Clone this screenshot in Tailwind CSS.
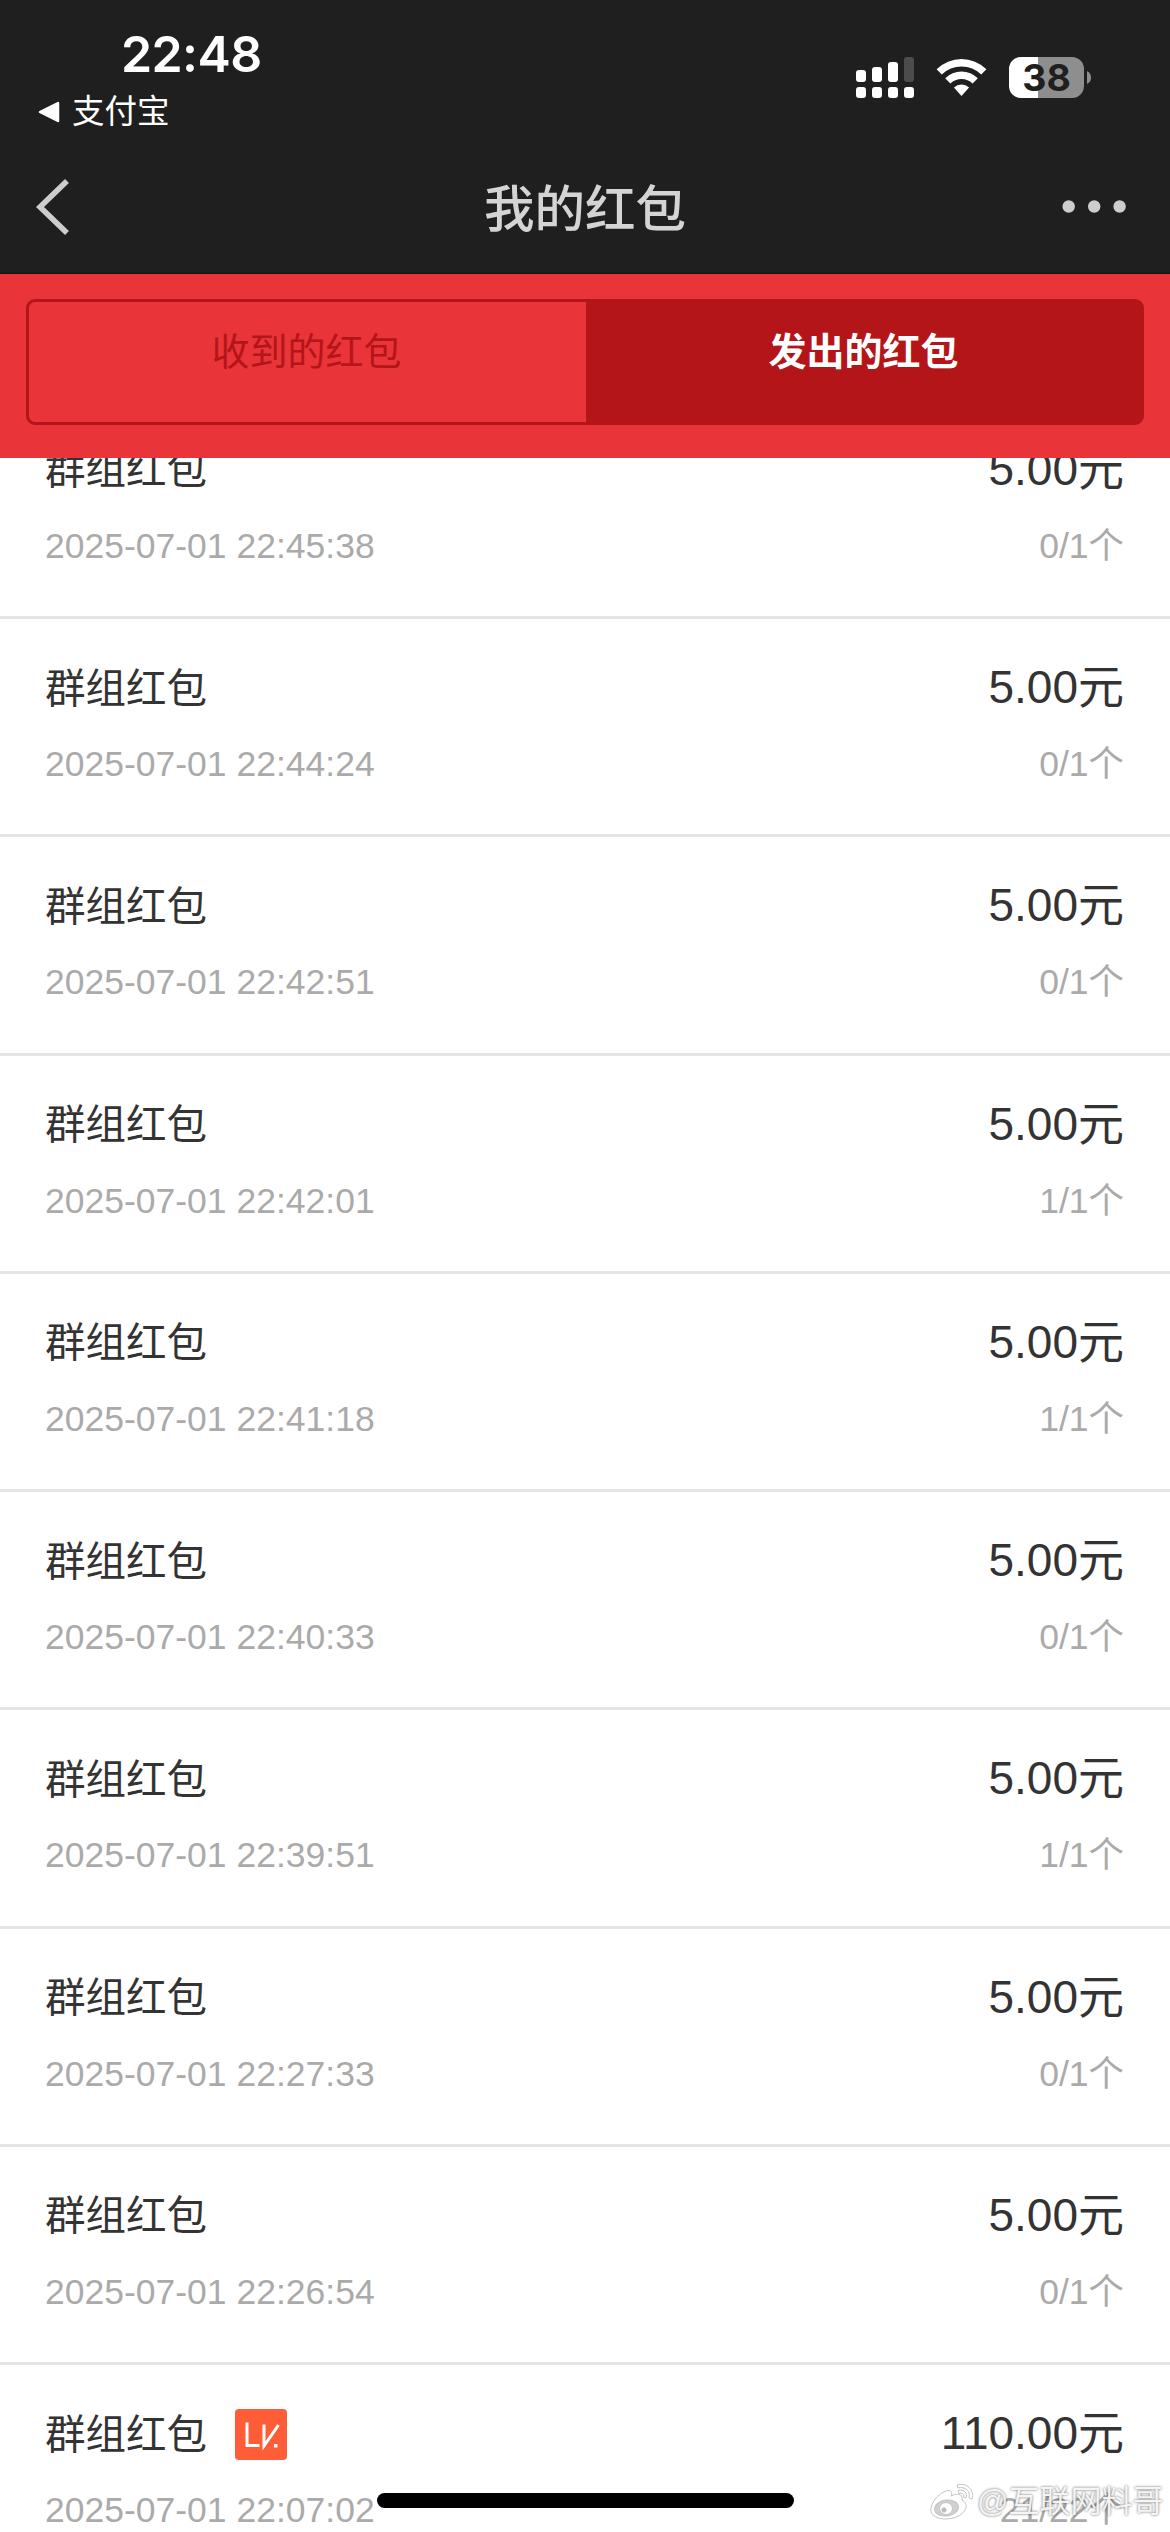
<!DOCTYPE html>
<html lang="zh-CN">
<head>
<meta charset="utf-8">
<title>我的红包</title>
<script src="https://cdn.jsdelivr.net/npm/@tailwindcss/browser@4"></script>
</head>
<body class="relative w-[1170px] h-[2532px] overflow-hidden bg-white flex flex-col font-['Liberation_Sans','Noto_Sans_CJK_SC',sans-serif]">
<header class="h-[274px] shrink-0 bg-[#1f1f1f] border-b border-black/40">
  <div class="h-[140px] flex justify-between">
    <div class="pt-[24px]">
      <div class="pl-[121px] h-[60px] leading-[60px] text-[50px] tracking-[-0.6px] font-semibold text-white font-['Inter',sans-serif]">22:48</div>
      <div class="pl-[38px] h-[56px] flex items-center gap-[12px] text-white text-[32.5px] leading-[56px]">
        <svg class="w-[22px] h-[22px]" viewBox="0 0 22 22"><path d="M2 11 L20 2 V20 Z" fill="#fff" stroke="#fff" stroke-width="2.5" stroke-linejoin="round"/></svg>
        <span>支付宝</span>
      </div>
    </div>
    <div class="pt-[57px] pr-[79px] flex items-start">
      <svg class="w-[58px] h-[41px]" viewBox="0 0 58 41" fill="#fff">
        <rect x="0" y="13" width="10" height="12" rx="3"/><rect x="16" y="10" width="10" height="15" rx="3"/><rect x="32" y="5" width="10" height="20" rx="3"/><rect x="48" y="0" width="10" height="25" rx="3" fill="#4c4c4c"/>
        <rect x="0" y="30" width="10" height="11" rx="3"/><rect x="16" y="30" width="10" height="11" rx="3"/><rect x="32" y="30" width="10" height="11" rx="3"/><rect x="48" y="30" width="10" height="11" rx="3"/>
      </svg>
      <svg class="ml-[22px] w-[51px] h-[41px]" viewBox="0 0 51 41" fill="#fff">
        <path d="M0.6 12.2 A35.5 35.5 0 0 1 50.4 12.2 L45.2 17.6 A28 28 0 0 0 5.8 17.6 Z"/>
        <path d="M9.2 21.2 A23.2 23.2 0 0 1 41.8 21.2 L36.6 26.6 A15.8 15.8 0 0 0 14.4 26.6 Z"/>
        <path d="M17.9 30.6 A11 11 0 0 1 33.1 30.6 L25.5 39 Z"/>
      </svg>
      <div class="ml-[22px] w-[75px] h-[41px] rounded-[12px] bg-linear-to-r from-white from-[29px] to-[#8e8e8e] to-[29px] text-[#1f1f1f] text-center text-[37.5px] leading-[42px] font-bold font-['Inter',sans-serif]">38</div>
      <svg class="ml-[3px] w-[4px] h-[41px]" viewBox="0 0 4 41"><path d="M0 14 Q4 16 4 20.500 Q4 25 0 27 Z" fill="#8e8e8e"/></svg>
    </div>
  </div>
  <div class="h-[133px] flex justify-between">
    <svg class="mt-[38px] ml-[36px] w-[200px] h-[58px]" viewBox="0 0 200 58"><path d="M31 3 L4 29 L31 55" fill="none" stroke="#cdcdcd" stroke-width="5.600"/></svg>
    <h1 class="pt-[37px] text-[50.5px] leading-[66px] font-medium text-[#d4d4d4]">我的红包</h1>
    <svg class="mt-[59px] w-[236px] h-[15px]" viewBox="0 0 236 15" fill="#cdcdcd"><circle cx="134.700" cy="7.500" r="6.200"/><circle cx="160.200" cy="7.500" r="6.200"/><circle cx="185.600" cy="7.500" r="6.200"/></svg>
  </div>
</header>
<nav class="h-[184px] shrink-0 bg-[#e9343a] px-[26px] pt-[25px]">
  <div class="h-[126px] flex border-[3px] border-[#b41518] rounded-[9px] text-[38px] leading-[56px] text-center">
    <div class="w-[557px] pt-[22px] pr-[2px] text-[#b41518]">收到的红包</div>
    <div class="flex-1 pt-[22px] bg-[#b41518] text-white font-bold">发出的红包</div>
  </div>
</nav>
<main class="flex-1 min-h-0 overflow-hidden">
  <ul id="list" class="-mt-[57.25px]"></ul>
</main>
<div class="absolute left-[377px] top-[2493px] w-[417px] h-[15px] rounded-full bg-black"></div>
<div class="absolute left-[929px] top-[2482px] flex items-center gap-[3px] h-[40px] text-[31px] leading-[40px] text-white/90 [text-shadow:0_0_3px_rgba(0,0,0,0.4),0_0_2px_rgba(0,0,0,0.3)] whitespace-nowrap">
  <svg class="w-[45px] h-[40px] overflow-visible" viewBox="0 0 45 40">
    <g fill="#fff" stroke="#c4c4c4" stroke-width="1">
      <path d="M2 26 C3 18 13 9 19 8.500 C23 8.500 23 11 22.500 14 C27 11 34 11 33 18 C39 21 38 28 33 31.500 C26 38 10 39 4 33 C2 31 1.500 29 2 26 Z"/>
      <ellipse cx="17.500" cy="26" rx="12" ry="8" transform="rotate(-8 17.5 26)" fill="#d0d0d0"/>
      <ellipse cx="17" cy="26.500" rx="6.500" ry="6" fill="#fff"/>
      <circle cx="15" cy="28" r="2.200" fill="#bbb"/>
      <path d="M28 3 C37 0 46 8 43 17 L40 16 C42 9 36 4 29 6 Z"/>
      <path d="M29 8.500 C35 7 39 11 37 16 L34.500 15 C35.500 12 33 10.500 30 11.500 Z"/>
    </g>
  </svg>
  <span>@互联网料哥</span>
</div>
<script>
const rows = [
  ['22:45:38', '5.00', '0/1'], ['22:44:24', '5.00', '0/1'], ['22:42:51', '5.00', '0/1'],
  ['22:42:01', '5.00', '1/1'], ['22:41:18', '5.00', '1/1'], ['22:40:33', '5.00', '0/1'],
  ['22:39:51', '5.00', '1/1'], ['22:27:33', '5.00', '0/1'], ['22:26:54', '5.00', '0/1'],
  ['22:07:02', '<span class="tracking-[-3.5px]">1</span>10.00', '21/22', true],
];
const badge = `<svg class="ml-[28px] w-[52px] h-[51px]" viewBox="0 0 52 51"><rect width="52" height="51" rx="4" fill="#ff5c38"/><path d="M12 13.500 V36.500 H24.500 M29 15.500 V37 L43.500 16" fill="none" stroke="#fff" stroke-width="3"/><rect x="39" y="35" width="3.500" height="3.500" fill="#fff"/></svg>`;
document.getElementById('list').innerHTML = rows.map(([t, a, n, lv]) => `
  <li class="h-[218.25px] pl-[45px] pr-[46px] pt-[38px] border-b-[3px] border-[#e5e5e5]">
    <div class="h-[61px] flex justify-between leading-[60px] text-[#333]">
      <div class="mt-[2px] flex items-center text-[40.5px]"><span>群组红包</span>${lv ? badge : ''}</div>
      <span class="text-[46px]">${a}元</span>
    </div>
    <div class="mt-[21px] h-[50px] flex justify-between leading-[50px] text-[35.5px] text-[#aaa]">
      <span>2025-07-01 ${t}</span><span>${n}个</span>
    </div>
  </li>`).join('');
</script>
</body>
</html>
